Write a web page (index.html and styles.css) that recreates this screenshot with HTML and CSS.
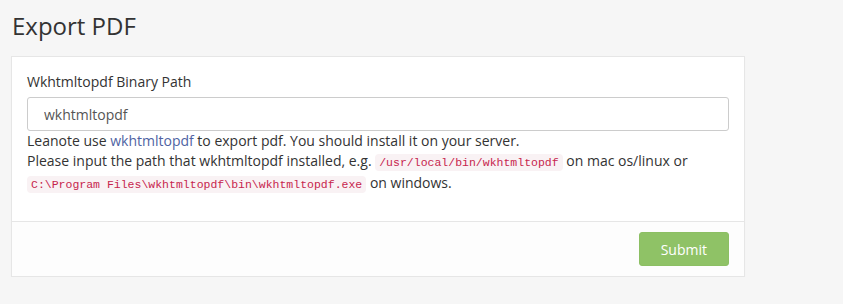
FILE: index.html
```html
<!DOCTYPE html>
<html lang="en">

<head>
    <meta charset="UTF-8">
    <meta name="viewport" content="width=device-width, initial-scale=1.0">
    <title>Export PDF</title>
    <link rel="stylesheet" href="styles.css">
</head>

<body>
    <div class="page">
        <h1 class="title">Export PDF</h1>
        <form class="panel">
            <div class="panel-body">
                <label class="label" for="path">Wkhtmltopdf Binary Path</label>
                <input class="input" id="path" type="text" name="path" value="wkhtmltopdf">
                <div class="help">
                    Leanote use <a href="#">wkhtmltopdf</a> to export pdf. You should install it on your server.<br>
                    Please input the path that wkhtmltopdf installed, e.g. <code>/usr/local/bin/wkhtmltopdf</code> on mac os/linux or<br>
                    <code>C:\Program Files\wkhtmltopdf\bin\wkhtmltopdf.exe</code> on windows.
                </div>
            </div>
            <div class="panel-footer">
                <button class="btn" type="button">Submit</button>
            </div>
        </form>
    </div>
</body>

</html>
```

FILE: styles.css
```css
body {
    margin: 0;
    padding: 0;
    background: #f6f6f6;
    font-family: 'Open Sans', sans-serif;
    font-size: 14px;
    color: #333;
}

.page {
    padding: 0 11px;
}

.title {
    margin: 0;
    padding: 9px 0 0 1px;
    height: 56px;
    box-sizing: border-box;
    font-size: 24px;
    font-weight: normal;
    color: #333;
}

.panel {
    width: 734px;
    box-sizing: border-box;
    background: #fff;
    border: 1px solid #e6e6e6;
    box-shadow: 0 1px 1px rgba(0, 0, 0, .04);
}

.panel-body {
    padding: 15px 15px 26px;
}

.label {
    display: block;
    line-height: 20px;
    margin-bottom: 5px;
}

.input {
    display: block;
    width: 100%;
    height: 34px;
    box-sizing: border-box;
    padding: 6px 16px;
    border: 1px solid #ccc;
    border-radius: 3px;
    font-family: inherit;
    font-size: 14px;
    color: #555;
    outline: none;
}

.help {
    line-height: 20px;
}

.help a {
    color: #4f63a3;
    text-decoration: none;
}

code {
    padding: 2px 4px;
    font-family: 'Liberation Mono', monospace;
    font-size: 11.5px;
    color: #c7254e;
    background: #f9f2f4;
    border-radius: 4px;
}

.panel-footer {
    display: flex;
    justify-content: flex-end;
    padding: 10px 15px;
    background: #fdfdfd;
    border-top: 1px solid #e6e6e6;
}

.btn {
    height: 34px;
    padding: 0 21px;
    border: 1px solid #8cbf63;
    border-radius: 3px;
    background: #8fc266;
    color: #fff;
    font-family: inherit;
    font-size: 14px;
}
```
